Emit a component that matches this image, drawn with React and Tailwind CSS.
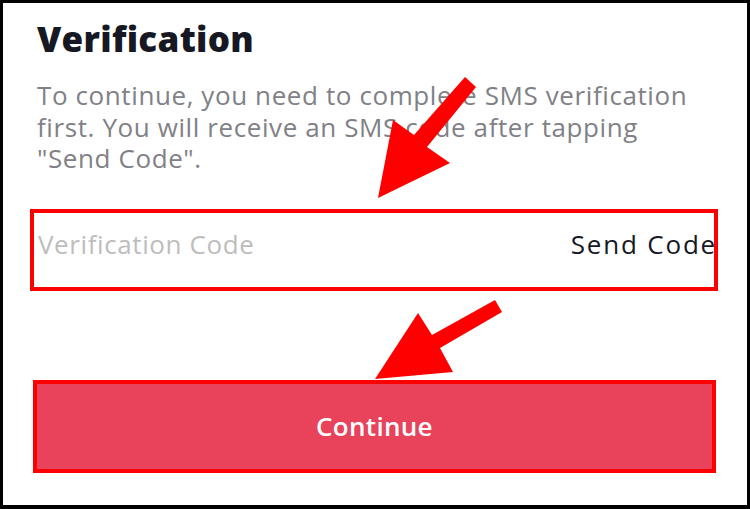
import React from 'react';

function Arrows() {
  return (
    <svg className="absolute inset-0 pointer-events-none" width="750" height="509" viewBox="0 0 750 509">
      <polygon fill="#ff0000" points="465,77 476,87 427,147 450,163 378,198 393,120 414,135" />
      <polygon fill="#ff0000" points="495,300 502,312 440,348 453,372 375,379 418,313 432,335" />
    </svg>
  );
}

export default function App() {
  return (
    <div className="relative w-[750px] h-[509px] bg-black pt-[3px] pl-[3px] pr-[3px] pb-[4px]" style={{ fontFamily: '"Open Sans", Lato, sans-serif' }}>
      <div className="h-full w-full bg-white flex flex-col">
        <h1 className="ml-[34px] mt-[14px] text-[35px] leading-[44px] font-extrabold tracking-[0.3px] text-[#161823]">
          Verification
        </h1>
        <p className="ml-[34px] mt-[19px] text-[26px] leading-[31.5px] tracking-[0.6px] text-[#808187]">
          To continue, you need to complete SMS verification<br />
          first. You will receive an SMS code after tapping<br />
          "Send Code".
        </p>
        <div className="ml-[27px] mt-[34px] w-[688px] h-[82px] border-4 border-[#ff0000] flex items-center justify-between pl-[4px] pb-[10px]">
          <span className="text-[26px] tracking-[0.6px] text-[#bdbdbd]">Verification Code</span>
          <span className="text-[26px] tracking-[1.8px] text-[#161823] -mr-[3px]">Send Code</span>
        </div>
        <button className="ml-[30px] mt-[89px] w-[683px] h-[93px] border-4 border-[#ff0000] bg-[#e8435a] text-white text-[26px] font-semibold tracking-[0.3px] flex items-center justify-center">
          Continue
        </button>
      </div>
      <Arrows />
    </div>
  );
}
